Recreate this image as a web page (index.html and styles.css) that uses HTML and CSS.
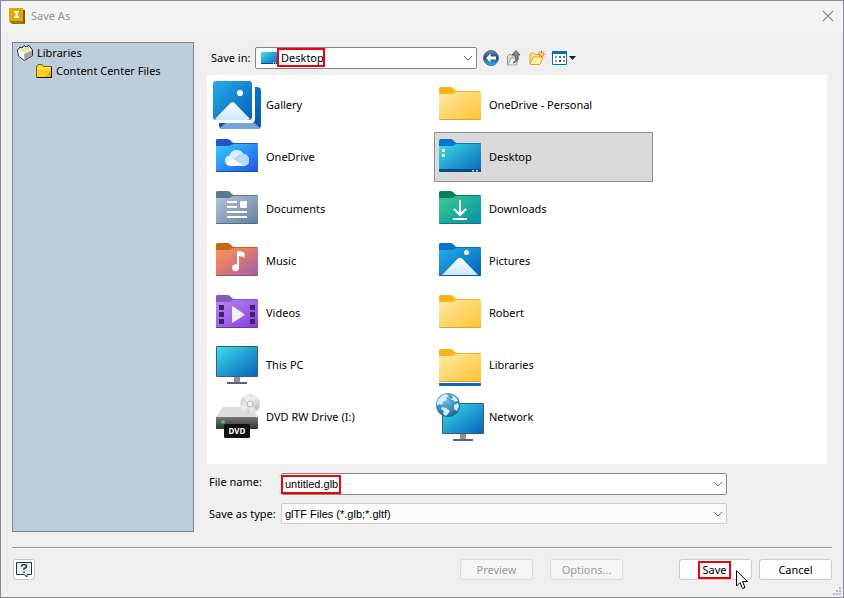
FILE: index.html
```html
<!DOCTYPE html>
<html lang="en">
<head>
<meta charset="utf-8">
<meta name="viewport" content="width=device-width, initial-scale=1">
<title>Save As</title>
<link rel="stylesheet" href="styles.css">
</head>
<body>
<svg class="defs" aria-hidden="true">
  <defs>
    <linearGradient id="g-yellow" x1="0" y1="0" x2="1" y2="1"><stop offset="0" stop-color="#ffeaa5"/><stop offset="1" stop-color="#fdc32f"/></linearGradient>
    <linearGradient id="g-cloud" x1="0" y1="0" x2="1" y2="1"><stop offset="0" stop-color="#35cdfb"/><stop offset=".5" stop-color="#2792f5"/><stop offset="1" stop-color="#2450dc"/></linearGradient>
    <linearGradient id="g-docs" x1="0" y1="0" x2="1" y2="1"><stop offset="0" stop-color="#b4c5d8"/><stop offset="1" stop-color="#647f9e"/></linearGradient>
    <linearGradient id="g-music" x1="0" y1="0" x2="1" y2="1"><stop offset="0" stop-color="#fb9556"/><stop offset=".5" stop-color="#d97776"/><stop offset="1" stop-color="#9a5cb4"/></linearGradient>
    <linearGradient id="g-video" x1="0" y1="0" x2="1" y2="1"><stop offset="0" stop-color="#b78af2"/><stop offset="1" stop-color="#873bdf"/></linearGradient>
    <linearGradient id="g-down" x1="0" y1="0" x2="1" y2="1"><stop offset="0" stop-color="#3ccb8c"/><stop offset="1" stop-color="#0092a8"/></linearGradient>
    <linearGradient id="g-screen" x1="0" y1="0" x2="1" y2="1"><stop offset="0" stop-color="#3ce0ea"/><stop offset=".5" stop-color="#209fd2"/><stop offset="1" stop-color="#0965bd"/></linearGradient>
    <linearGradient id="g-photo" x1="0" y1="0" x2="1" y2="1"><stop offset="0" stop-color="#24aee9"/><stop offset="1" stop-color="#075fb6"/></linearGradient>
    <linearGradient id="g-hill" x1="0" y1="0" x2="0" y2="1"><stop offset="0" stop-color="#fff"/><stop offset="1" stop-color="#cde6fb"/></linearGradient>
    <linearGradient id="g-back" x1="0" y1="0" x2="0" y2="1"><stop offset="0" stop-color="#0678d4"/><stop offset="1" stop-color="#0d55a0"/></linearGradient>
    <linearGradient id="g-metal" x1="0" y1="0" x2="0" y2="1"><stop offset="0" stop-color="#777"/><stop offset="1" stop-color="#343434"/></linearGradient>
    <linearGradient id="g-disc" x1="0" y1="0" x2="1" y2="1"><stop offset="0" stop-color="#c4c4c4"/><stop offset=".45" stop-color="#eee"/><stop offset="1" stop-color="#a7a7a7"/></linearGradient>
    <radialGradient id="g-globe" cx=".4" cy=".3" r=".8"><stop offset="0" stop-color="#78bce3"/><stop offset=".6" stop-color="#3187bd"/><stop offset="1" stop-color="#16537f"/></radialGradient>
    <linearGradient id="g-arrow" x1="0" y1="0" x2="0" y2="1"><stop offset="0" stop-color="#7390aa"/><stop offset=".45" stop-color="#174c7b"/><stop offset="1" stop-color="#28b5ef"/></linearGradient>
    <path id="tab" d="M3 7.500Q3 6 4.500 6H14.500Q16 6 17 7L19 9Q20 10 21.500 10H44Q45 10 45 11V20H3Z"/>
    <path id="front" d="M3 13H15Q16.500 13 17.500 12.400L19 11.500Q20 11 21.500 11H45V38Q45 39 44 39H4Q3 39 3 38Z"/>
    <path id="edge" d="M3 37.500V38Q3 39 4 39H44Q45 39 45 38V37.500L44 38H4Z"/>
    <path id="chevron" d="M1 1L5 5L9 1" fill="none" stroke="#6a6a6a" stroke-width="1"/>
  </defs>
</svg>

<div class="window">
  <header class="titlebar">
    <svg class="app-icon" width="16" height="16" viewBox="0 0 16 16" aria-hidden="true">
      <path d="M2 2H16V16H4L2 14Z" fill="#7b5d00"/><path d="M0 0H14V13H0Z" fill="#dcaa05"/><path d="M0 13H14L16 16H3Z" fill="#9c7600"/>
      <path d="M5 3H10V4.500H8.500V8.500H10V10H5V8.500H6.500V4.500H5Z" fill="#fff"/>
    </svg>
    <h1 class="title">Save As</h1>
    <button class="close" type="button" aria-label="Close">
      <svg width="12" height="12" viewBox="0 0 12 12"><path d="M1 1L11 11M11 1L1 11" stroke="#8b8b8b" stroke-width="1.100"/></svg>
    </button>
  </header>

  <form class="dialog">
    <div class="content">
      <nav class="sidebar" aria-label="Libraries">
        <ul class="tree">
          <li><a class="tree-link" href="#libraries">
            <svg width="16" height="16" viewBox="0 0 16 16" aria-hidden="true"><path d="M.5 5L3 2L5 3L7 .5L9 2L12 .5L15.500 5V10.500L7.500 15.500L1.500 11Z" fill="#ecece6" stroke="#25252c"/><path d="M3 5L5 3L7 4L9 2L13 5L7 8Z" fill="#f0ebb0"/><path d="M4 4H5V5H4ZM6 5H7V6H6ZM8 3H9V4H8ZM10 4H11V5H10ZM8 6H9V7H8ZM11 2H12V3H11Z" fill="#d8c92a"/><path d="M7 9L15 5.500V10.500L7.500 15Z" fill="#a2a2a8"/><path d="M1.500 5.500L7 9V14.500L2 11Z" fill="#fff"/></svg>Libraries</a></li>
          <li><a class="tree-link child" href="#content-center">
            <svg width="16" height="16" viewBox="0 0 16 16" aria-hidden="true"><path d="M.5 14.500V4L2 1.500H6L7.500 3.500H15.500V14.500Z" fill="#ffd21d" stroke="#7b5d00"/><path d="M1 5.500H7L8 4.500H15" stroke="#fff59b" fill="none"/><path d="M1 14.500H15.500V4" stroke="#111" fill="none"/><path d="M9 14L15 7V14Z" fill="#f2ae0d"/></svg>Content Center Files</a></li>
        </ul>
      </nav>

      <div class="main">
        <div class="location">
          <label for="save-in">Save in:</label>
          <div class="combo combo-location">
            <select id="save-in" class="field"><option>Desktop</option></select>
            <svg class="combo-icon" width="17" height="12" viewBox="0 0 17 12" aria-hidden="true"><rect width="17" height="12" rx="1" fill="url(#g-screen)"/><path d="M0 11H17V12H0Z" fill="#0b4c7d"/><path d="M12 11H13M14 11H15" stroke="#fff"/></svg>
            <span class="mark mark-location"></span>
            <svg class="arrow" width="10" height="6" viewBox="0 0 10 6" aria-hidden="true"><use href="#chevron"/></svg>
          </div>
          <div class="tools">
            <button class="tool" type="button" aria-label="Back"><svg width="16" height="16" viewBox="0 0 16 16"><circle cx="8" cy="8" r="7.500" fill="url(#g-arrow)" stroke="#597084"/><path d="M7.500 3.500L3 8L7.500 12.500V9.500H13V6.500H7.500Z" fill="#fff"/></svg></button>
            <button class="tool" type="button" aria-label="Up one level"><svg width="16" height="16" viewBox="0 0 16 16"><path d="M1.500 14.500V6L3 4.500H5L6 6H11V14.500Z" fill="#ddd" stroke="#999"/><path d="M2 15L5 8H13L10 15Z" fill="#f5f5f5" stroke="#aaa"/><path d="M7 13Q11 11 9 5H6L10 .5L14 5H12Q13 12 7 13Z" fill="#888" stroke="#505050" stroke-width=".8"/></svg></button>
            <button class="tool" type="button" aria-label="New folder"><svg width="16" height="16" viewBox="0 0 16 16"><path d="M1 14V4L2 3H5L6.500 4.500H11V14Z" fill="#f8dc86" stroke="#dfaa3c"/><path d="M1 14.500L4 7H14L11 14.500Z" fill="#fff0a7" stroke="#dba834"/><path d="M12.500 .5V7.500M9 4H16M10 1.500L15 6.500M15 1.500L10 6.500" stroke="#ef5a20"/><circle cx="12.500" cy="4" r="1.500" fill="#ffd157"/></svg></button>
            <button class="tool tool-view" type="button" aria-label="View menu"><svg width="24" height="16" viewBox="0 0 24 16"><path d="M.5 1.500H14.500V14.500H.5Z" fill="#fff" stroke="#1167bd"/><path d="M0 1H15V4H0Z" fill="#1167bd"/><path d="M3 6H5V8H3Z" fill="#8a8fb5"/><path d="M7 6H9V8H7Z" fill="#3772ce"/><path d="M11 6H13V8H11Z" fill="#25943c"/><path d="M3 10H5V12H3Z" fill="#ef6c4d"/><path d="M7 10H9V12H7Z" fill="#253b91"/><path d="M11 10H13V12H11Z" fill="#c9941e"/><path d="M17 6H24L20.500 10Z" fill="#222"/></svg></button>
          </div>
        </div>

        <ul class="files">
          <li><button class="file" type="button"><svg width="48" height="48" viewBox="0 0 48 48" aria-hidden="true"><rect x="6" y="6" width="42" height="42" rx="4" fill="url(#g-back)"/><path d="M7 47L14 41H40L47 47Q46 48 44 48H10Q8 48 7 47Z" fill="#75a4da"/><path d="M0 0H42V38Q42 42 38 42H0Z" fill="#fff"/><rect width="39" height="39" rx="3" fill="url(#g-photo)"/><path d="M2 38L17 22.500Q19.500 20 22 22.500L37 38Q36 39 34 39H4Q3 39 2 38Z" fill="url(#g-hill)"/><circle cx="27" cy="12" r="3" fill="#fff"/></svg><span>Gallery</span></button></li>
          <li><button class="file" type="button"><svg width="48" height="48" viewBox="0 0 48 48" aria-hidden="true"><use href="#tab" fill="#f9b41a"/><use href="#front" fill="url(#g-yellow)"/><use href="#edge" fill="#dfa32c"/></svg><span>OneDrive - Personal</span></button></li>
          <li><button class="file" type="button"><svg width="48" height="48" viewBox="0 0 48 48" aria-hidden="true"><use href="#tab" fill="#2155c9"/><use href="#front" fill="url(#g-cloud)"/><use href="#edge" fill="#2248b8"/><path d="M17 33Q12 32 12 27.500Q12 23 16.500 22.500Q18 17 23.500 17Q28 17 30.500 21Q36 21.500 36 27.500Q36 32 31 33Z" fill="#dcefff"/><path d="M14 31L24 23Q27 20 30.500 21Q36 22 36 27.500Q36 32 31 33H17Z" fill="#b5d8fb"/><path d="M20 26L31 33H17Q14 32 13 30Z" fill="#fff"/></svg><span>OneDrive</span></button></li>
          <li><button class="file selected" type="button" aria-pressed="true"><svg width="48" height="48" viewBox="0 0 48 48" aria-hidden="true"><use href="#tab" fill="#0b74d0"/><use href="#front" fill="url(#g-screen)"/><path d="M3 36H45V38Q45 39 44 39H4Q3 39 3 38Z" fill="#0c497a"/><path d="M6 16H9V19H6ZM6 21H9V24H6Z" fill="#fff"/><path d="M36 37H38V38.500H36ZM40 37H42V38.500H40Z" fill="#bcdcf4"/></svg><span>Desktop</span></button></li>
          <li><button class="file" type="button"><svg width="48" height="48" viewBox="0 0 48 48" aria-hidden="true"><use href="#tab" fill="#5b7a88"/><use href="#front" fill="url(#g-docs)"/><use href="#edge" fill="#536c8a"/><path d="M14 16H24V18H14ZM14 21H24V23H14ZM14 26H34V28H14ZM14 31H34V33H14ZM28 16H33Q34 16 34 17V22Q34 23 33 23H28Q27 23 27 22V17Q27 16 28 16Z" fill="#fff"/></svg><span>Documents</span></button></li>
          <li><button class="file" type="button"><svg width="48" height="48" viewBox="0 0 48 48" aria-hidden="true"><use href="#tab" fill="#087e5c"/><use href="#front" fill="url(#g-down)"/><use href="#edge" fill="#087b82"/><path d="M24 15V30M18 24L24 30L30 24M17 34H31" fill="none" stroke="#fff" stroke-width="2"/></svg><span>Downloads</span></button></li>
          <li><button class="file" type="button"><svg width="48" height="48" viewBox="0 0 48 48" aria-hidden="true"><use href="#tab" fill="#c56612"/><use href="#front" fill="url(#g-music)"/><use href="#edge" fill="#9a4e6b"/><path d="M24 14Q28 14 31.500 15.500V20.500Q28 19 26 19V31A3.500 3.500 0 1 1 24 27.500Z" fill="#fff"/></svg><span>Music</span></button></li>
          <li><button class="file" type="button"><svg width="48" height="48" viewBox="0 0 48 48" aria-hidden="true"><use href="#tab" fill="#0b72cc"/><use href="#front" fill="url(#g-photo)"/><path d="M6 38L21.500 22Q24 19.500 26.500 22L42 38Z" fill="url(#g-hill)"/><circle cx="30.500" cy="15.500" r="2.500" fill="#fff"/><use href="#edge" fill="#0855a5"/></svg><span>Pictures</span></button></li>
          <li><button class="file" type="button"><svg width="48" height="48" viewBox="0 0 48 48" aria-hidden="true"><use href="#tab" fill="#845bc4"/><use href="#front" fill="url(#g-video)"/><use href="#edge" fill="#6b34b5"/><path d="M6 16H11V21H6ZM6 23H11V28H6ZM6 30H11V35H6ZM37 16H42V21H37ZM37 23H42V28H37ZM37 30H42V35H37Z" fill="#432363"/><path d="M19 18Q19 17 20 17.500L31 25Q32 25.500 31 26.500L20 33.500Q19 34 19 33Z" fill="#f3f0f8"/></svg><span>Videos</span></button></li>
          <li><button class="file" type="button"><svg width="48" height="48" viewBox="0 0 48 48" aria-hidden="true"><use href="#tab" fill="#f9b41a"/><use href="#front" fill="url(#g-yellow)"/><use href="#edge" fill="#dfa32c"/></svg><span>Robert</span></button></li>
          <li><button class="file" type="button"><svg width="48" height="48" viewBox="0 0 48 48" aria-hidden="true"><path d="M21 36H27V41H21Z" fill="#8b949c"/><path d="M14 41H34V43H14Z" fill="#59636e"/><rect x="3" y="5" width="42" height="31" rx="1" fill="#435b6e"/><path d="M4 6H44V35H4Z" fill="url(#g-screen)"/></svg><span>This PC</span></button></li>
          <li><button class="file" type="button"><svg width="48" height="48" viewBox="0 0 48 48" aria-hidden="true"><g transform="translate(0 2)"><use href="#tab" fill="#f9b41a"/><use href="#front" fill="url(#g-yellow)"/><use href="#edge" fill="#dfa32c"/></g><path d="M3 42H45V44Q45 45 44 45H4Q3 45 3 44Z" fill="#0c67b9"/></svg><span>Libraries</span></button></li>
          <li><button class="file" type="button"><svg width="48" height="48" viewBox="0 0 48 48" aria-hidden="true"><path d="M10 14H38L45 24H3Z" fill="#dcdde0"/><path d="M3 24H45V35Q45 36 44 36H4Q3 36 3 35Z" fill="url(#g-metal)"/><circle cx="10" cy="29" r="1.800" fill="#35db3d"/><circle cx="37" cy="11" r="10" fill="url(#g-disc)"/><path d="M37 11L30 4Q34 1 37 1ZM37 11L44 18Q41 21 37 21Z" fill="#fff" opacity=".5"/><circle cx="37" cy="11" r="3" fill="#eee" stroke="#bbb"/><rect x="11" y="31" width="26" height="14" rx="1.500" fill="#111"/><text class="disc-label" x="24" y="41" text-anchor="middle">DVD</text></svg><span>DVD RW Drive (I:)</span></button></li>
          <li><button class="file" type="button"><svg width="48" height="48" viewBox="0 0 48 48" aria-hidden="true"><path d="M24 41H30V46H24Z" fill="#8b949c"/><path d="M17 46H37V48H17Z" fill="#59636e"/><rect x="6" y="10" width="42" height="31" rx="1" fill="#435b6e"/><path d="M7 11H47V40H7Z" fill="url(#g-screen)"/><circle cx="12" cy="12" r="12" fill="url(#g-globe)"/><path d="M2 7Q5 2 10 1L13 3L10 5L11 7L7 9L6 12L3 11L1 13Q0 10 2 7ZM15 2Q20 3 22 8L19 9L17 7L15 7L17 4ZM6 14L10 15L14 18L12 21L10 23L7 21L8 18L5 16ZM18 12L22 10L23 13L21 18L18 16Z" fill="#d5edf5"/></svg><span>Network</span></button></li>
        </ul>

        <div class="fields">
          <label class="name-label" for="file-name">File name:</label>
          <div class="combo">
            <input id="file-name" class="field" type="text" value="untitled.glb">
            <span class="mark mark-name"></span>
            <svg class="arrow" width="10" height="6" viewBox="0 0 10 6" aria-hidden="true"><use href="#chevron"/></svg>
          </div>
          <label for="file-type">Save as type:</label>
          <div class="combo">
            <select id="file-type" class="field field-light"><option>glTF Files (*.glb;*.gltf)</option></select>
            <svg class="arrow" width="10" height="6" viewBox="0 0 10 6" aria-hidden="true"><use href="#chevron"/></svg>
          </div>
        </div>
      </div>
    </div>

    <footer class="footer">
      <button class="help" type="button" aria-label="Help"><svg width="16" height="17" viewBox="0 0 16 17"><path d="M.5 1.500H15.500V13.500H11V16L8 13.500H.5Z" fill="#e9edf2" stroke="#28333c"/><path d="M5.500 5.500Q5.500 3.500 8 3.500Q10.500 3.500 10.500 5.500Q10.500 7 8 7.500V9M8 10.500V12" fill="none" stroke="#28333c" stroke-width="1.500"/></svg></button>
      <div class="actions">
        <button class="button preview" type="button" disabled>Preview</button>
        <button class="button options" type="button" disabled>Options...</button>
        <button class="button save" type="button"><span>Save</span>
          <svg class="cursor" width="13" height="20" viewBox="0 0 13 20" aria-hidden="true"><path d="M.5 .8V16L4 12.500L6.500 18.500L9 17.500L6.500 11.500H11.500Z" fill="#fff" stroke="#000"/></svg>
        </button>
        <button class="button" type="button">Cancel</button>
      </div>
    </footer>
  </form>
  <svg class="grip" width="8" height="8" viewBox="0 0 8 8" aria-hidden="true"><path d="M6 0H8V2H6ZM3 3H5V5H3ZM6 3H8V5H6ZM0 6H2V8H0ZM3 6H5V8H3ZM6 6H8V8H6Z" fill="#b9b9b9"/></svg>
</div>
</body>
</html>
```
FILE: styles.css
```css
* {
  box-sizing: border-box;
}

body {
  margin: 0;
  font: 11px/16px "Noto Sans", "Open Sans", sans-serif;
  color: #000;
}

ul {
  margin: 0;
  padding: 0;
  list-style: none;
}

button,
input,
select {
  margin: 0;
  font: inherit;
  color: inherit;
}

button {
  padding: 0;
  border: 0;
  background: none;
}

svg {
  display: block;
  flex: none;
}

.defs {
  position: absolute;
  width: 0;
  height: 0;
}

.window {
  position: relative;
  display: flex;
  flex-direction: column;
  min-height: 100vh;
  border: 1px solid #858b97;
  background: #efefef;
}

.titlebar {
  display: flex;
  align-items: center;
  gap: 6px;
  height: 30px;
  padding: 0 9px 0 8px;
  background: #f3f3f3;
}

.title {
  flex: 1;
  margin: 0;
  font-size: 11px;
  font-weight: 400;
  color: #929292;
}

.dialog {
  display: flex;
  flex: 1;
  flex-direction: column;
  padding: 11px 11px 17px;
}

.content {
  display: flex;
  flex: 1;
  gap: 13px;
}

.sidebar {
  width: 182px;
  border: 1px solid #7d8592;
  background: #becddb;
}

.tree {
  padding: 1px 4px;
}

.tree-link {
  display: flex;
  align-items: center;
  gap: 4px;
  height: 18px;
  color: inherit;
  text-decoration: none;
}

.child {
  padding-left: 19px;
}

.main {
  flex: 1;
  padding: 5px 5px 7px 0;
}

.location {
  display: flex;
  align-items: center;
  padding-left: 4px;
}

.location label {
  width: 44px;
  white-space: nowrap;
}

.combo {
  position: relative;
}

.combo-location {
  width: 222px;
}

.field {
  display: block;
  width: 100%;
  height: 22px;
  padding: 0 20px 0 3px;
  border: 1px solid #858585;
  border-radius: 2px;
  background: #fff;
  appearance: none;
  font-family: "Liberation Sans", Arial, sans-serif;
}

.combo-location .field {
  padding-left: 25px;
  font-family: inherit;
}

.field-light {
  height: 21px;
  border-color: #ccc;
  background: #fbfbfb;
}

.arrow {
  position: absolute;
  top: 8px;
  right: 4px;
  pointer-events: none;
}

.combo-icon {
  position: absolute;
  top: 5px;
  left: 6px;
}

.mark {
  position: absolute;
  border: 2px solid #f00008;
  pointer-events: none;
}

.mark-location {
  top: 1px;
  left: 22px;
  width: 48px;
  height: 19px;
}

.mark-name {
  top: 2px;
  left: 0;
  width: 60px;
  height: 19px;
}

.tools {
  display: flex;
  gap: 7px;
  padding-left: 6px;
}

.files {
  display: grid;
  grid-template-columns: repeat(2, 219px);
  align-content: start;
  gap: 2px 4px;
  margin-top: 6px;
  padding: 5px 4px 22px;
  min-height: 389px;
  background: #fff;
}

.file {
  display: flex;
  align-items: center;
  gap: 5px;
  width: 100%;
  height: 50px;
  padding: 0 1px;
  border: 1px solid transparent;
  text-align: left;
}

.selected {
  border-color: #929292;
  background: #d9d9d9;
}

.disc-label {
  font: 700 8px "Noto Sans", sans-serif;
  fill: #fff;
}

.fields {
  display: grid;
  grid-template-columns: 72px 1fr;
  align-items: center;
  gap: 8px 0;
  margin: 9px 100px 0 2px;
}

.fields label {
  white-space: nowrap;
}

.name-label {
  padding-bottom: 4px;
}

.footer {
  display: flex;
  align-items: center;
  justify-content: space-between;
  margin-top: 15px;
  padding-top: 11px;
  border-top: 1px solid #969696;
  box-shadow: inset 0 1px #fff;
}

.help {
  display: grid;
  place-items: center;
  width: 22px;
  height: 21px;
  margin-left: 1px;
  border: 1px solid #c6c6c6;
  border-radius: 3px;
  background: #fdfdfd;
}

.actions {
  display: flex;
}

.button {
  position: relative;
  width: 73px;
  height: 21px;
  border: 1px solid #cbcbcb;
  border-radius: 3px;
  background: #fdfdfd;
}

.button:disabled {
  border-color: #dcdcdc;
  background: #f5f5f5;
  color: #9b9b9b;
}

.preview {
  margin-right: 17px;
}

.options {
  margin-right: 56px;
}

.save {
  display: flex;
  align-items: center;
  justify-content: center;
  margin-right: 7px;
}

.save span {
  margin-right: 2px;
  padding: 0 2px;
  border: 2px solid #f00008;
  line-height: 14px;
}

.cursor {
  position: absolute;
  top: 10px;
  left: 56px;
  pointer-events: none;
}

.grip {
  position: absolute;
  right: 2px;
  bottom: 2px;
}
```
